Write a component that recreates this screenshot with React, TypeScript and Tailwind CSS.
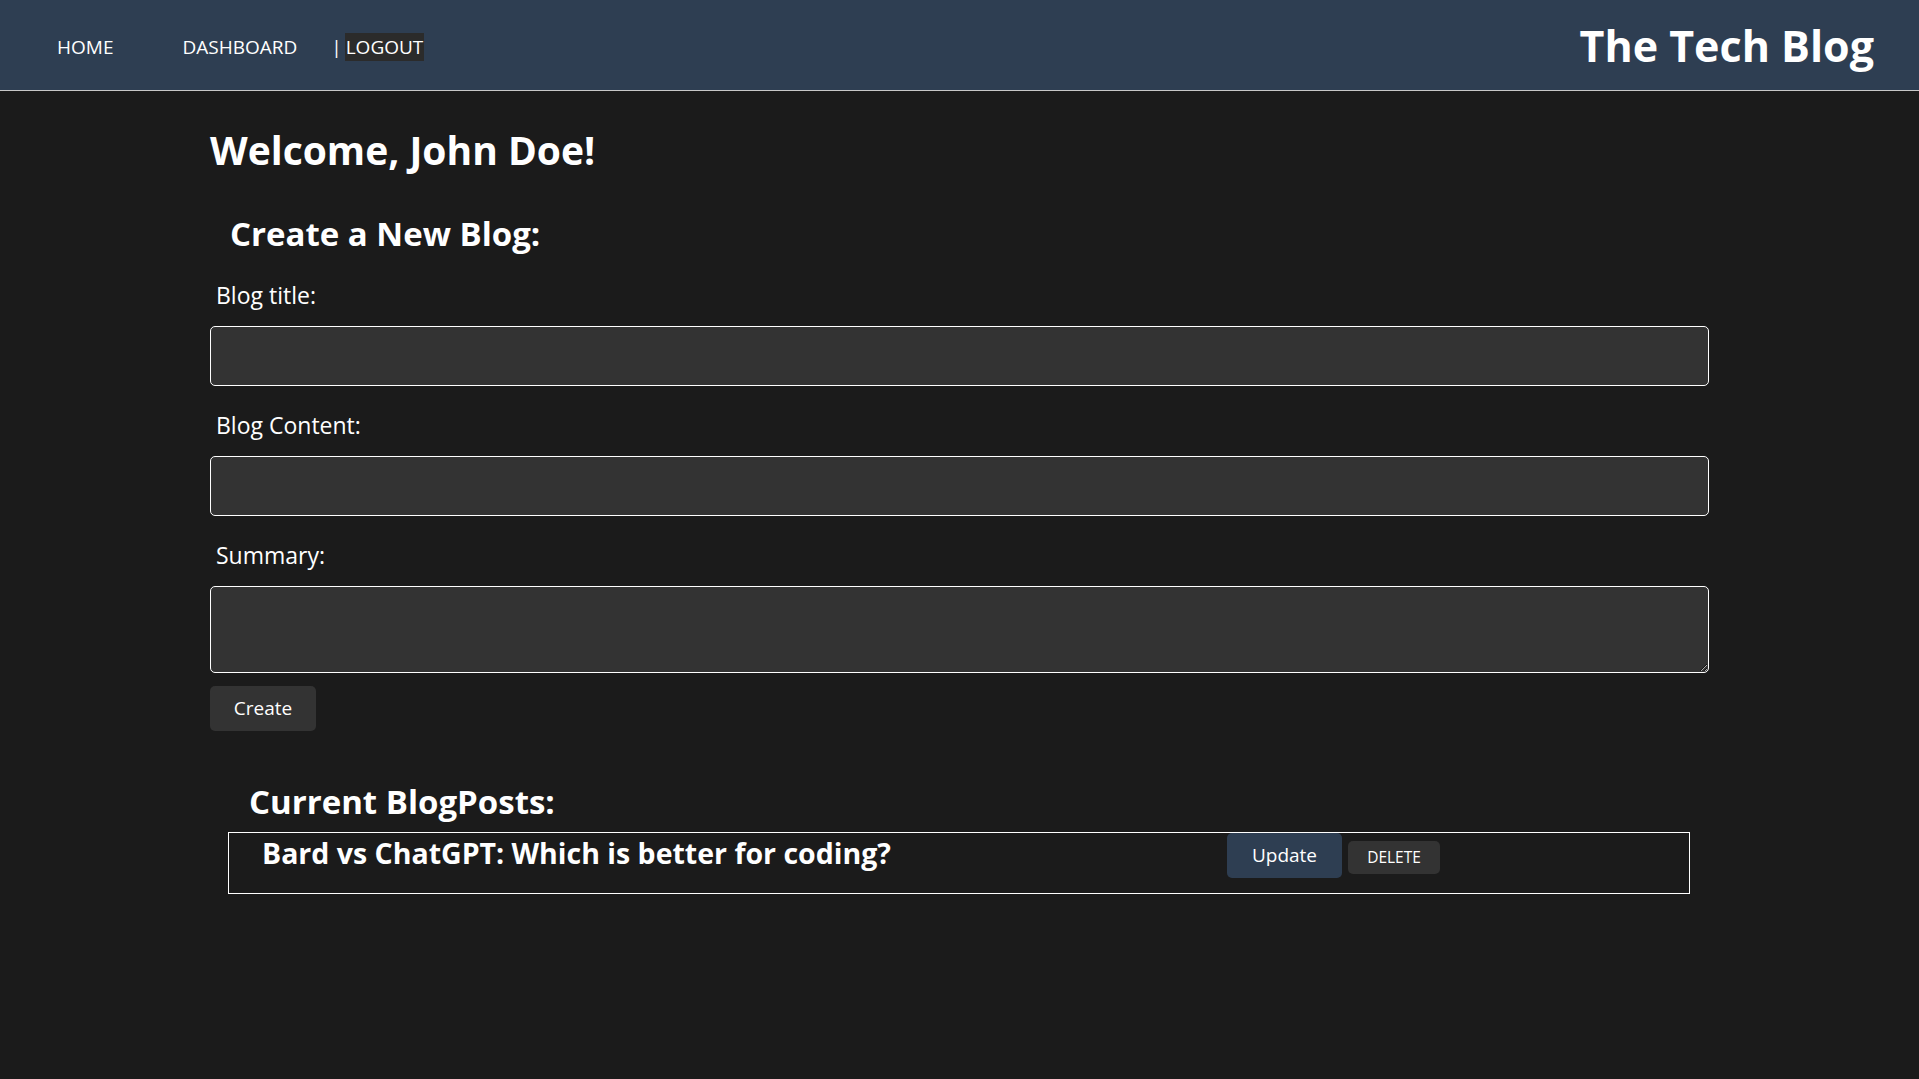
import React from "react";

const font = { fontFamily: '"Open Sans", "Noto Sans", sans-serif' };

function Field({ label, tall = false }: { label: string; tall?: boolean }) {
  return (
    <div className="flex flex-col">
      <label className="pl-[6px] text-[23px] leading-[30px] text-white mb-[16px]">{label}</label>
      {tall ? (
        <textarea className="h-[87px] w-full rounded-[5px] border border-white bg-[#333333] text-white" />
      ) : (
        <input
          type="text"
          className="h-[60px] w-full rounded-[5px] border border-white bg-[#333333] text-white"
        />
      )}
    </div>
  );
}

export default function App() {
  return (
    <div className="min-h-screen bg-[#1b1b1b] text-white" style={font}>
      <header className="flex h-[91px] items-center justify-between border-b border-[#c8c8c8] bg-[#2e3e52] pl-[57px] pr-[45px]">
        <nav className="flex items-center text-[19px] text-white pt-[4px]">
          <a>HOME</a>
          <a className="ml-[69px]">DASHBOARD</a>
          <span className="ml-[34px]">|</span>
          <a className="ml-[3px] bg-[#2b2b2b] px-[1px]">LOGOUT</a>
        </nav>
        <h1 className="text-[43px] font-bold leading-none">The Tech Blog</h1>
      </header>

      <main className="mx-auto w-[1499px]">
        <h1 className="mt-[34px] text-[39px] font-bold leading-[50px]">Welcome, John Doe!</h1>

        <h2 className="mt-[37px] pl-[20px] text-[33px] font-bold leading-[44px]">Create a New Blog:</h2>

        <form className="mt-[24px] flex flex-col gap-[24px]">
          <Field label="Blog title:" />
          <Field label="Blog Content:" />
          <Field label="Summary:" tall />
        </form>
        <button className="mt-[13px] h-[45px] w-[106px] rounded-[5px] bg-[#333333] text-[19px] text-white">
          Create
        </button>

        <h2 className="mt-[49px] pl-[39px] text-[33px] font-bold leading-[44px]">Current BlogPosts:</h2>
        <div className="ml-[18px] mt-[8px] flex h-[62px] w-[1462px] border border-white">
          <div className="w-[998px] pl-[33px] pt-[2px] text-[28.5px] font-bold leading-[36px]">
            Bard vs ChatGPT: Which is better for coding?
          </div>
          <div className="flex items-start gap-[6px]">
            <button className="h-[45px] w-[115px] rounded-[5px] bg-[#2e3e52] text-[19px] text-white">Update</button>
            <button className="mt-[8px] h-[33px] w-[92px] rounded-[5px] bg-[#333333] text-[15.5px] text-white">DELETE</button>
          </div>
        </div>
      </main>
    </div>
  );
}
